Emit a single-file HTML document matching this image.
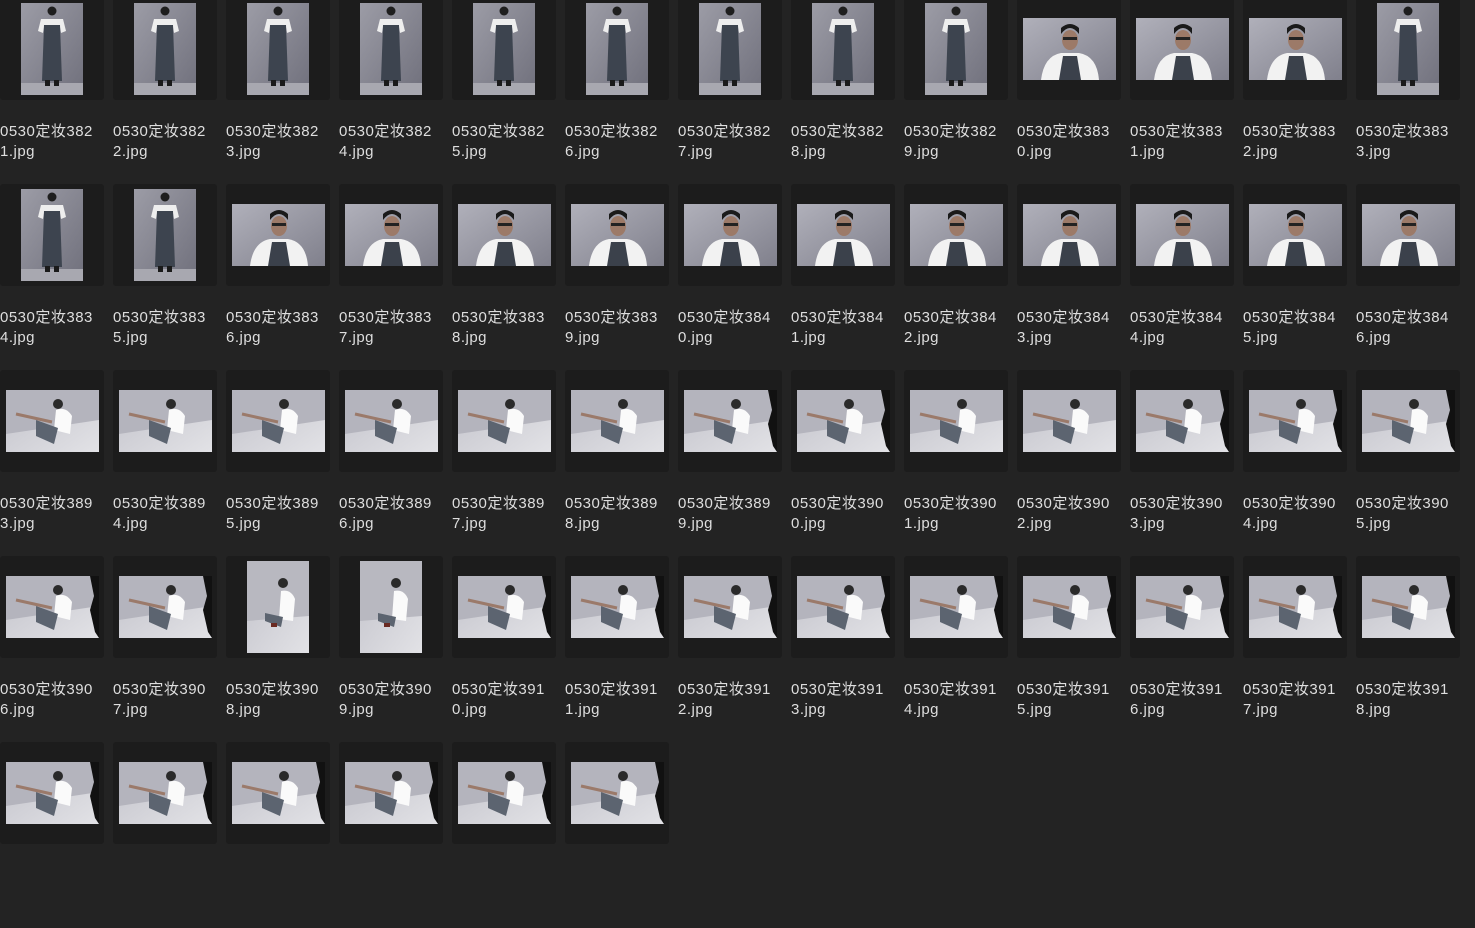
<!DOCTYPE html>
<html><head><meta charset="utf-8"><style>
html,body{margin:0;padding:0;background:#232323;width:1475px;height:841px;overflow:hidden}
.g{position:absolute;left:0;top:-2px;display:grid;grid-template-columns:repeat(13,104px);column-gap:9px;grid-auto-rows:186px}
.c{position:relative;width:104px}
.t{position:absolute;left:0;top:0;width:104px;height:102px;background:#1c1c1c;border-radius:3px}
.t svg{position:absolute}
.p svg{left:21px;top:5px;width:62px;height:92px}
.l svg{left:6px;top:20px;width:93px;height:62px}
.n{position:absolute;left:0;top:124px;font:15px/20px "Liberation Sans","Noto Sans CJK SC",sans-serif;color:#dedede;white-space:nowrap;letter-spacing:0.5px}
</style></head><body>
<svg width="0" height="0" style="position:absolute">
<defs>
<linearGradient id="bg1" x1="0" y1="0" x2="1" y2="1"><stop offset="0" stop-color="#9c9ca6"/><stop offset="1" stop-color="#70707c"/></linearGradient>
<linearGradient id="bg2" x1="0" y1="0" x2="1" y2="1"><stop offset="0" stop-color="#b0b0ba"/><stop offset="1" stop-color="#80808c"/></linearGradient>
<linearGradient id="bg3" x1="0" y1="0" x2="1" y2="1"><stop offset="0" stop-color="#c2c2ca"/><stop offset="1" stop-color="#e2e2e6"/></linearGradient>
<symbol id="st" viewBox="0 0 62 92"><rect width="62" height="92" fill="url(#bg1)"/><rect y="80" width="62" height="12" fill="#a8a8b0"/><circle cx="31" cy="8" r="4.5" fill="#1e1e1e"/><path d="M20 16h22l3 12-5 2-1-6H23l-1 6-5-2z" fill="#eee"/><path d="M23 22h16l2 56H21z" fill="#3d444f"/><rect x="24" y="77" width="5" height="6" fill="#1a1a1a"/><rect x="33" y="77" width="5" height="6" fill="#1a1a1a"/></symbol>
<symbol id="bu" viewBox="0 0 93 62"><rect width="93" height="62" fill="url(#bg2)"/><path d="M18 62q3-24 20-27h18q18 3 20 27z" fill="#f2f2f2"/><path d="M36 62l4-24h14l4 24z" fill="#3b414b"/><ellipse cx="47" cy="22" rx="8" ry="10" fill="#9c7a68"/><path d="M38 16q9-12 18 0v-6q-9-8-18 0z" fill="#1a1a1a"/><rect x="40" y="19" width="14" height="3" fill="#222"/></symbol>
<symbol id="si" viewBox="0 0 93 62"><rect width="93" height="62" fill="url(#bg3)"/><path d="M0 0h93v30L0 44z" fill="#b4b4bd"/><path d="M50 20q10-4 16 6l-2 18-16-4z" fill="#fafafa"/><circle cx="52" cy="14" r="5" fill="#2a2a2a"/><path d="M30 30l22 8-4 16-18-8z" fill="#5c6470"/><path d="M10 24l36 8" stroke="#9b7a6a" stroke-width="3"/></symbol>
<symbol id="sk" viewBox="0 0 93 62"><rect width="93" height="62" fill="url(#bg3)"/><path d="M0 0h93v30L0 44z" fill="#b4b4bd"/><path d="M84 0h9v62l-4-6-5-22 4-14z" fill="#111"/><path d="M50 20q10-4 16 6l-2 18-16-4z" fill="#fafafa"/><circle cx="52" cy="14" r="5" fill="#2a2a2a"/><path d="M30 30l22 8-4 16-18-8z" fill="#5c6470"/><path d="M10 24l36 8" stroke="#9b7a6a" stroke-width="3"/></symbol>
<symbol id="sp" viewBox="0 0 62 92"><rect width="62" height="92" fill="url(#bg3)"/><path d="M0 0h62v55L0 60z" fill="#b8b8c0"/><path d="M34 30q10-2 14 8l-2 22-14-2z" fill="#fafafa"/><circle cx="36" cy="22" r="5" fill="#2a2a2a"/><path d="M18 52l18 4-2 10-16-6z" fill="#5c6470"/><rect x="24" y="62" width="6" height="4" fill="#6a2a22"/></symbol>
</defs></svg>
<div class="g">
<div class="c"><div class="t p"><svg><use href="#st"/></svg></div><div class="n">0530定妆382<br>1.jpg</div></div>
<div class="c"><div class="t p"><svg><use href="#st"/></svg></div><div class="n">0530定妆382<br>2.jpg</div></div>
<div class="c"><div class="t p"><svg><use href="#st"/></svg></div><div class="n">0530定妆382<br>3.jpg</div></div>
<div class="c"><div class="t p"><svg><use href="#st"/></svg></div><div class="n">0530定妆382<br>4.jpg</div></div>
<div class="c"><div class="t p"><svg><use href="#st"/></svg></div><div class="n">0530定妆382<br>5.jpg</div></div>
<div class="c"><div class="t p"><svg><use href="#st"/></svg></div><div class="n">0530定妆382<br>6.jpg</div></div>
<div class="c"><div class="t p"><svg><use href="#st"/></svg></div><div class="n">0530定妆382<br>7.jpg</div></div>
<div class="c"><div class="t p"><svg><use href="#st"/></svg></div><div class="n">0530定妆382<br>8.jpg</div></div>
<div class="c"><div class="t p"><svg><use href="#st"/></svg></div><div class="n">0530定妆382<br>9.jpg</div></div>
<div class="c"><div class="t l"><svg><use href="#bu"/></svg></div><div class="n">0530定妆383<br>0.jpg</div></div>
<div class="c"><div class="t l"><svg><use href="#bu"/></svg></div><div class="n">0530定妆383<br>1.jpg</div></div>
<div class="c"><div class="t l"><svg><use href="#bu"/></svg></div><div class="n">0530定妆383<br>2.jpg</div></div>
<div class="c"><div class="t p"><svg><use href="#st"/></svg></div><div class="n">0530定妆383<br>3.jpg</div></div>

<div class="c"><div class="t p"><svg><use href="#st"/></svg></div><div class="n">0530定妆383<br>4.jpg</div></div>
<div class="c"><div class="t p"><svg><use href="#st"/></svg></div><div class="n">0530定妆383<br>5.jpg</div></div>
<div class="c"><div class="t l"><svg><use href="#bu"/></svg></div><div class="n">0530定妆383<br>6.jpg</div></div>
<div class="c"><div class="t l"><svg><use href="#bu"/></svg></div><div class="n">0530定妆383<br>7.jpg</div></div>
<div class="c"><div class="t l"><svg><use href="#bu"/></svg></div><div class="n">0530定妆383<br>8.jpg</div></div>
<div class="c"><div class="t l"><svg><use href="#bu"/></svg></div><div class="n">0530定妆383<br>9.jpg</div></div>
<div class="c"><div class="t l"><svg><use href="#bu"/></svg></div><div class="n">0530定妆384<br>0.jpg</div></div>
<div class="c"><div class="t l"><svg><use href="#bu"/></svg></div><div class="n">0530定妆384<br>1.jpg</div></div>
<div class="c"><div class="t l"><svg><use href="#bu"/></svg></div><div class="n">0530定妆384<br>2.jpg</div></div>
<div class="c"><div class="t l"><svg><use href="#bu"/></svg></div><div class="n">0530定妆384<br>3.jpg</div></div>
<div class="c"><div class="t l"><svg><use href="#bu"/></svg></div><div class="n">0530定妆384<br>4.jpg</div></div>
<div class="c"><div class="t l"><svg><use href="#bu"/></svg></div><div class="n">0530定妆384<br>5.jpg</div></div>
<div class="c"><div class="t l"><svg><use href="#bu"/></svg></div><div class="n">0530定妆384<br>6.jpg</div></div>

<div class="c"><div class="t l"><svg><use href="#si"/></svg></div><div class="n">0530定妆389<br>3.jpg</div></div>
<div class="c"><div class="t l"><svg><use href="#si"/></svg></div><div class="n">0530定妆389<br>4.jpg</div></div>
<div class="c"><div class="t l"><svg><use href="#si"/></svg></div><div class="n">0530定妆389<br>5.jpg</div></div>
<div class="c"><div class="t l"><svg><use href="#si"/></svg></div><div class="n">0530定妆389<br>6.jpg</div></div>
<div class="c"><div class="t l"><svg><use href="#si"/></svg></div><div class="n">0530定妆389<br>7.jpg</div></div>
<div class="c"><div class="t l"><svg><use href="#si"/></svg></div><div class="n">0530定妆389<br>8.jpg</div></div>
<div class="c"><div class="t l"><svg><use href="#sk"/></svg></div><div class="n">0530定妆389<br>9.jpg</div></div>
<div class="c"><div class="t l"><svg><use href="#sk"/></svg></div><div class="n">0530定妆390<br>0.jpg</div></div>
<div class="c"><div class="t l"><svg><use href="#si"/></svg></div><div class="n">0530定妆390<br>1.jpg</div></div>
<div class="c"><div class="t l"><svg><use href="#si"/></svg></div><div class="n">0530定妆390<br>2.jpg</div></div>
<div class="c"><div class="t l"><svg><use href="#sk"/></svg></div><div class="n">0530定妆390<br>3.jpg</div></div>
<div class="c"><div class="t l"><svg><use href="#sk"/></svg></div><div class="n">0530定妆390<br>4.jpg</div></div>
<div class="c"><div class="t l"><svg><use href="#sk"/></svg></div><div class="n">0530定妆390<br>5.jpg</div></div>

<div class="c"><div class="t l"><svg><use href="#sk"/></svg></div><div class="n">0530定妆390<br>6.jpg</div></div>
<div class="c"><div class="t l"><svg><use href="#sk"/></svg></div><div class="n">0530定妆390<br>7.jpg</div></div>
<div class="c"><div class="t p"><svg><use href="#sp"/></svg></div><div class="n">0530定妆390<br>8.jpg</div></div>
<div class="c"><div class="t p"><svg><use href="#sp"/></svg></div><div class="n">0530定妆390<br>9.jpg</div></div>
<div class="c"><div class="t l"><svg><use href="#sk"/></svg></div><div class="n">0530定妆391<br>0.jpg</div></div>
<div class="c"><div class="t l"><svg><use href="#sk"/></svg></div><div class="n">0530定妆391<br>1.jpg</div></div>
<div class="c"><div class="t l"><svg><use href="#sk"/></svg></div><div class="n">0530定妆391<br>2.jpg</div></div>
<div class="c"><div class="t l"><svg><use href="#sk"/></svg></div><div class="n">0530定妆391<br>3.jpg</div></div>
<div class="c"><div class="t l"><svg><use href="#sk"/></svg></div><div class="n">0530定妆391<br>4.jpg</div></div>
<div class="c"><div class="t l"><svg><use href="#sk"/></svg></div><div class="n">0530定妆391<br>5.jpg</div></div>
<div class="c"><div class="t l"><svg><use href="#sk"/></svg></div><div class="n">0530定妆391<br>6.jpg</div></div>
<div class="c"><div class="t l"><svg><use href="#sk"/></svg></div><div class="n">0530定妆391<br>7.jpg</div></div>
<div class="c"><div class="t l"><svg><use href="#sk"/></svg></div><div class="n">0530定妆391<br>8.jpg</div></div>

<div class="c"><div class="t l"><svg><use href="#sk"/></svg></div></div>
<div class="c"><div class="t l"><svg><use href="#sk"/></svg></div></div>
<div class="c"><div class="t l"><svg><use href="#sk"/></svg></div></div>
<div class="c"><div class="t l"><svg><use href="#sk"/></svg></div></div>
<div class="c"><div class="t l"><svg><use href="#sk"/></svg></div></div>
<div class="c"><div class="t l"><svg><use href="#sk"/></svg></div></div>
</div>
</body></html>
